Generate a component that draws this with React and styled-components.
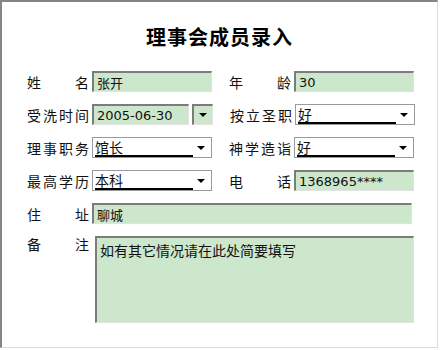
import styled, {createGlobalStyle} from "styled-components"

const Global = createGlobalStyle`
  body {
    margin: 0;
    background: #ffffff;
    font-family: "DejaVu Sans", "Noto Sans CJK SC", sans-serif;
  }
`

const Frame = styled.div`
  box-sizing: border-box;
  width: 438px;
  height: 348px;
  padding: 23px 0 0 25px;
  border-top: 2px solid #858585;
  border-left: 2px solid #858585;
  border-right: 1px solid #dcdcdc;
  border-bottom: 1px solid #dcdcdc;
  background: #ffffff;
`

const Title = styled.h1`
  margin: 0 0 22px -25px;
  font-family: "Noto Sans CJK SC", sans-serif;
  font-size: 20px;
  line-height: 24px;
  font-weight: 700;
  letter-spacing: 1px;
  text-align: center;
  color: #000;
`

const Rows = styled.div`
  display: flex;
  flex-direction: column;
  gap: 12px;
`

const Row = styled.div`
  display: flex;
  gap: 17px;
`

const Pair = styled.div`
  display: flex;
  align-items: ${p => p.$top ? "flex-start" : "center"};
  gap: 3px;
`

const Label = styled.span`
  width: 62px;
  font-family: "Noto Sans CJK SC", sans-serif;
  font-size: 14px;
  line-height: 20px;
  color: #111;
  text-align: justify;
  text-align-last: justify;
  margin-top: ${p => p.$top ? "-2px" : "0"};
`

const Field = styled.input`
  box-sizing: border-box;
  width: ${p => p.$w || 120}px;
  height: 21px;
  margin: 0;
  padding: 0 3px;
  border-style: solid;
  border-width: 2px 1px 1px 2px;
  border-color: #7c7c7c #e2e2e2 #e2e2e2 #7c7c7c;
  background: #cde7cd;
  font-family: "DejaVu Sans", "Noto Sans CJK SC", sans-serif;
  font-size: 13px;
  color: #111;
  outline: none;
`

const Memo = styled.textarea`
  box-sizing: border-box;
  width: 319px;
  height: 87px;
  margin: 0 0 0 3px;
  padding: 3px 3px;
  border-style: solid;
  border-width: 2px 1px 1px 2px;
  border-color: #7c7c7c #e2e2e2 #e2e2e2 #7c7c7c;
  background: #cde7cd;
  font-family: "Noto Sans CJK SC", sans-serif;
  font-size: 14px;
  line-height: 18px;
  color: #111;
  resize: none;
  outline: none;
`

const DateWrap = styled.div`
  display: flex;
  gap: 3px;
`

const DropButton = styled.div`
  box-sizing: border-box;
  width: 21px;
  height: 21px;
  display: flex;
  align-items: center;
  justify-content: center;
  border-style: solid;
  border-width: 2px 1px 1px 2px;
  border-color: #7c7c7c #e2e2e2 #e2e2e2 #7c7c7c;
  background: #cde7cd;
`

const Arrow = styled.span`
  width: 0;
  height: 0;
  border-left: 4px solid transparent;
  border-right: 4px solid transparent;
  border-top: 4px solid #000;
`

const Select = styled.div`
  box-sizing: border-box;
  width: 120px;
  height: 21px;
  display: flex;
  align-items: center;
  justify-content: space-between;
  padding: 0 6px 0 2px;
  border: 1px solid #9a9a9a;
  background: #ffffff;
`

const Value = styled.span`
  width: 98px;
  height: 16px;
  margin-top: 1px;
  border-bottom: 2px solid #000;
  font-family: "Noto Sans CJK SC", sans-serif;
  font-size: 14px;
  line-height: 16px;
  color: #111;
`

const Choice = ({value}) => (
    <Select>
        <Value>{value}</Value>
        <Arrow/>
    </Select>
)

const App = () => {
    return (<>
        <Global/>
        <Frame>
            <Title>理事会成员录入</Title>
            <Rows>
                <Row>
                    <Pair><Label>姓名</Label><Field readOnly defaultValue="张开"/></Pair>
                    <Pair><Label>年龄</Label><Field readOnly defaultValue="30"/></Pair>
                </Row>
                <Row>
                    <Pair>
                        <Label>受洗时间</Label>
                        <DateWrap>
                            <Field $w={97} readOnly defaultValue="2005-06-30"/>
                            <DropButton><Arrow/></DropButton>
                        </DateWrap>
                    </Pair>
                    <Pair><Label>按立圣职</Label><Choice value="好"/></Pair>
                </Row>
                <Row>
                    <Pair><Label>理事职务</Label><Choice value="馆长"/></Pair>
                    <Pair><Label>神学造诣</Label><Choice value="好"/></Pair>
                </Row>
                <Row>
                    <Pair><Label>最高学历</Label><Choice value="本科"/></Pair>
                    <Pair><Label>电话</Label><Field readOnly defaultValue="1368965****"/></Pair>
                </Row>
                <Row>
                    <Pair><Label>住址</Label><Field $w={320} readOnly defaultValue="聊城"/></Pair>
                </Row>
                <Row>
                    <Pair $top>
                        <Label $top>备注</Label>
                        <Memo readOnly defaultValue="如有其它情况请在此处简要填写"/>
                    </Pair>
                </Row>
            </Rows>
        </Frame>
    </>)
}

export default App
